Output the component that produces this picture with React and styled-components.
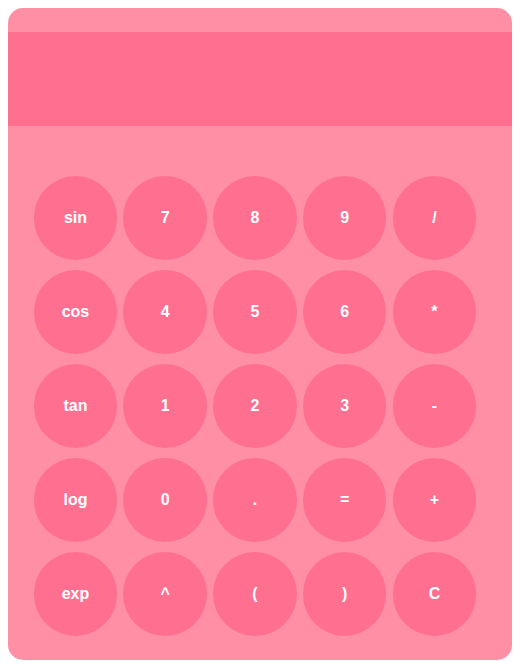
import React from "react";
import styled, { createGlobalStyle } from "styled-components";

const GlobalStyle = createGlobalStyle`
  body {
    margin: 8px;
    background: #ffffff;
    font-family: "Liberation Sans", Arial, sans-serif;
  }
`;

const Card = styled.div`
  width: 504px;
  height: 652px;
  box-sizing: border-box;
  padding-top: 24px;
  background-color: #ff8fa5;
  border-radius: 15px;
  overflow: hidden;
  display: flex;
  flex-direction: column;
`;

const Display = styled.div`
  height: 94px;
  background-color: #ff7090;
  flex-shrink: 0;
`;

const Keypad = styled.div`
  margin-top: 50px;
  padding: 0 25.7px;
  display: grid;
  grid-template-columns: repeat(5, 83.6px);
  column-gap: 6.15px;
  row-gap: 10.4px;
`;

const Key = styled.button`
  width: 83.6px;
  height: 83.6px;
  border: none;
  border-radius: 50%;
  background-color: #ff7090;
  color: #ffffff;
  font-family: "Liberation Sans", Arial, sans-serif;
  font-weight: bold;
  font-size: 16px;
  padding: 0;
  cursor: pointer;
  display: flex;
  align-items: center;
  justify-content: center;
`;

const keys = [
  "sin", "7", "8", "9", "/",
  "cos", "4", "5", "6", "*",
  "tan", "1", "2", "3", "-",
  "log", "0", ".", "=", "+",
  "exp", "^", "(", ")", "C",
];

const App = () => {
  return (
    <>
      <GlobalStyle />
      <Card>
        <Display />
        <Keypad>
          {keys.map((k) => (
            <Key key={k}>{k}</Key>
          ))}
        </Keypad>
      </Card>
    </>
  );
};

export default App;
